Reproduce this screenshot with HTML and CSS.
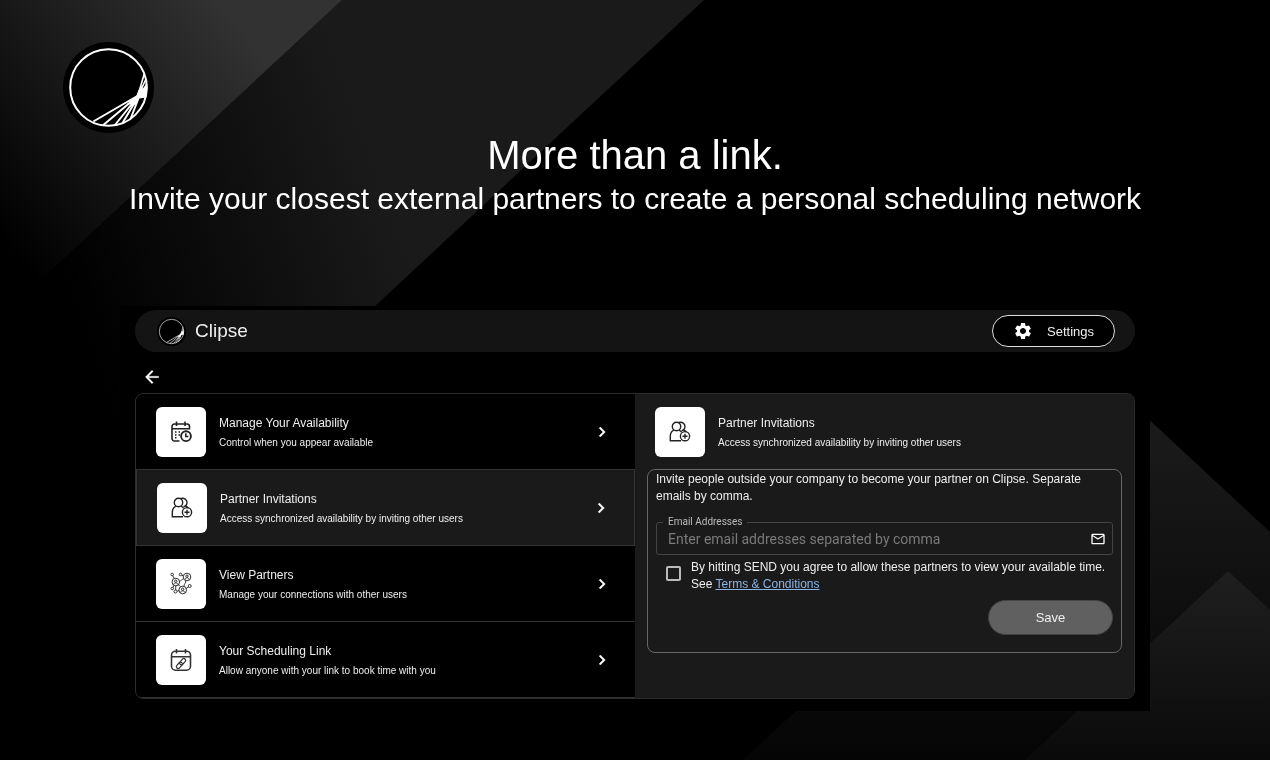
FILE: index.html
```html
<!DOCTYPE html>
<html lang="en">
<head>
    <meta charset="UTF-8">
    <meta name="viewport" content="width=device-width, initial-scale=1.0">
    <title>Clipse - Partner Invitations</title>
    <link rel="stylesheet" href="styles.css">
</head>
<body>
    <!-- Shared icons -->
    <svg class="sprite" aria-hidden="true">
        <symbol id="logo" viewBox="0 0 91 91">
            <circle cx="45.5" cy="45.5" r="45.5" fill="#000"/>
            <g fill="none" stroke="#fff" stroke-width="2">
                <circle cx="45.5" cy="45.5" r="38.3"/>
                <path d="M74.300 54L30.300 79.500M74.300 54.500L40.300 83M74.800 54.500L52 83M75 55L59.500 81M76 55L67.500 77"/>
                <path d="M74.500 55L81.500 31M76 52L83 37M76 54L84 42" stroke-width="1.600"/>
            </g>
            <path d="M72.500 56L75.500 48L79 44L80 47L83 43L84.500 45L83.500 55.500L76 56.500L72.500 63L64 62Z" fill="#fff"/>
        </symbol>
        <symbol id="chevron" viewBox="0 0 24 24">
            <path d="M8.590 16.590L13.170 12 8.590 7.410 10 6l6 6-6 6z" fill="#fff" stroke="#fff" stroke-width=".5"/>
        </symbol>
        <symbol id="partner-add" viewBox="0 0 24 24">
            <g fill="none" stroke="#222" stroke-width="1.400">
                <path d="M13 20.800H2.300v-4.600c0-3.200 1.400-5 3.700-6M11 10.300c1.200.4 1.900.9 2.500 1.700M15.300 10c1.500.4 2.600 1.200 3.200 2.200"/>
                <circle cx="8.500" cy="6.500" r="4.200"/>
                <path d="M10.800 2.500c3.500-1 6.200 1.200 6.200 4.100 0 2.200-1.400 3.800-3.500 4.200"/>
                <circle cx="17" cy="16.200" r="4.600"/>
                <path d="M17 13.700v5M14.500 16.200h5"/>
            </g>
        </symbol>
    </svg>

    <svg class="backdrop" viewBox="0 0 1270 760" preserveAspectRatio="xMidYMid slice" aria-hidden="true">
        <defs>
            <linearGradient id="g1" gradientUnits="userSpaceOnUse" x1="128" y1="-107" x2="-118" y2="98">
                <stop offset="0" stop-color="#323232"/>
                <stop offset="1" stop-color="#000"/>
            </linearGradient>
            <linearGradient id="g2" gradientUnits="userSpaceOnUse" x1="380" y1="180" x2="70" y2="290">
                <stop offset="0" stop-color="#1a1a1a"/>
                <stop offset="1" stop-color="#000"/>
            </linearGradient>
            <linearGradient id="g3" gradientUnits="userSpaceOnUse" x1="0" y1="401" x2="0" y2="760">
                <stop offset="0" stop-color="#1c1c1c"/>
                <stop offset="1" stop-color="#050505"/>
            </linearGradient>
            <linearGradient id="g4" gradientUnits="userSpaceOnUse" x1="0" y1="571" x2="0" y2="760">
                <stop offset="0" stop-color="#1f1f1f"/>
                <stop offset="1" stop-color="#0a0a0a"/>
            </linearGradient>
        </defs>
        <path d="M342 0H704L0 655V318Z" fill="url(#g2)"/>
        <path d="M0 0H342L0 318Z" fill="url(#g1)"/>
        <path d="M1129 401L1270 532V760H743Z" fill="url(#g3)"/>
        <path d="M1228 571L1270 610V760H1025Z" fill="url(#g4)"/>
    </svg>

    <header class="hero">
        <svg class="hero-logo" role="img" aria-label="Clipse"><use href="#logo"/></svg>
        <h1>More than a link.</h1>
        <p>Invite your closest external partners to create a personal scheduling network</p>
    </header>

    <main class="app">
        <div class="app-bar">
            <svg class="app-logo" aria-hidden="true"><use href="#logo"/></svg>
            <span class="app-name">Clipse</span>
            <button type="button" class="settings-btn">
                <svg viewBox="0 0 24 24" aria-hidden="true"><path fill="#fff" d="M19.140 12.940c.040-.300.060-.610.060-.940 0-.320-.020-.640-.070-.940l2.030-1.580c.180-.140.230-.410.120-.610l-1.920-3.320c-.120-.220-.370-.290-.590-.220l-2.390.960c-.500-.380-1.030-.700-1.620-.940l-.360-2.540c-.040-.240-.240-.410-.480-.410h-3.840c-.240 0-.430.170-.470.410l-.360 2.540c-.590.240-1.130.570-1.620.940l-2.390-.960c-.220-.080-.470 0-.590.220L2.740 8.870c-.120.210-.080.470.120.610l2.030 1.580c-.050.300-.090.630-.090.940s.020.640.070.940l-2.030 1.580c-.180.140-.230.410-.120.610l1.920 3.320c.120.220.370.290.590.220l2.390-.960c.500.380 1.030.700 1.620.940l.360 2.540c.050.240.240.410.480.410h3.840c.240 0 .440-.170.470-.410l.360-2.540c.590-.240 1.130-.560 1.620-.940l2.390.960c.220.080.470 0 .590-.220l1.920-3.320c.120-.220.070-.470-.120-.610l-2.010-1.580zM12 15.600c-1.980 0-3.600-1.620-3.600-3.600s1.620-3.600 3.600-3.600 3.600 1.620 3.600 3.600-1.620 3.600-3.600 3.600z"/></svg>
                Settings
            </button>
        </div>

        <button type="button" class="back-btn" aria-label="Back">
            <svg viewBox="0 0 24 24" aria-hidden="true"><path fill="#fff" d="M20 11H7.830l5.590-5.590L12 4l-8 8 8 8 1.410-1.410L7.830 13H20v-2z" stroke="#fff" stroke-width=".3"/></svg>
        </button>

        <div class="columns">
            <nav class="menu">
                <a href="#availability" class="item">
                    <span class="tile">
                        <svg viewBox="0 0 24 24" aria-hidden="true">
                            <g fill="none" stroke="#222" stroke-width="1.600">
                                <path d="M10.500 21H5.500A2.500 2.500 0 0 1 3 18.500V6.500A2.500 2.500 0 0 1 5.500 4H18a2.500 2.500 0 0 1 2.500 2.500V9.500M3 8.700h17.500M7.500 1.500v4.500M16 1.500v4.500"/>
                                <circle cx="17" cy="16.200" r="4.900" stroke-width="1.900"/>
                                <path d="M16.800 13.300v3.200h2.600"/>
                            </g>
                            <path d="M6 11.200h1.500v1.500H6zM9.500 11.200H11v1.500H9.500zM6 14.200h1.500v1.500H6zM9.500 14.200H11v1.500H9.500zM6 17h1.500v1.500H6z" fill="#222"/>
                        </svg>
                    </span>
                    <span class="item-text">
                        <span class="item-title">Manage Your Availability</span>
                        <span class="item-sub">Control when you appear available</span>
                    </span>
                    <svg class="chevron" aria-hidden="true"><use href="#chevron"/></svg>
                </a>
                <a href="#invitations" class="item active">
                    <span class="tile"><svg aria-hidden="true"><use href="#partner-add"/></svg></span>
                    <span class="item-text">
                        <span class="item-title">Partner Invitations</span>
                        <span class="item-sub">Access synchronized availability by inviting other users</span>
                    </span>
                    <svg class="chevron" aria-hidden="true"><use href="#chevron"/></svg>
                </a>
                <a href="#partners" class="item">
                    <span class="tile">
                        <svg viewBox="0 1 24 24" aria-hidden="true">
                            <g fill="none" stroke="#333" stroke-width="1">
                                <circle cx="18" cy="6" r="3.800"/>
                                <circle cx="6.800" cy="11" r="3.800"/>
                                <circle cx="13.700" cy="19" r="3.800"/>
                                <circle cx="18" cy="5.200" r="1.200"/><path d="M15.800 8.700c.4-2.500 4-2.500 4.400 0"/>
                                <circle cx="6.800" cy="10.200" r="1.200"/><path d="M4.600 13.700c.4-2.500 4-2.500 4.400 0"/>
                                <circle cx="13.700" cy="18.200" r="1.200"/><path d="M11.500 21.700c.4-2.500 4-2.500 4.400 0"/>
                                <circle cx="3.200" cy="3.500" r="1.300"/><path d="M3.700 4.700L5.300 7.500"/>
                                <circle cx="11.500" cy="3.500" r="1.300"/><path d="M12.800 4l1.600 1"/>
                                <circle cx="3.300" cy="17.500" r="1.300"/><path d="M4 16.300l1.200-2"/>
                                <circle cx="6.500" cy="20.500" r="1.500"/><path d="M8 20.200l2-.6M6.700 19l.1-4.200"/>
                                <circle cx="20.700" cy="15" r="1.500"/><path d="M19.500 16l-2.400 1.500"/>
                                <path d="M10.600 10.200c1.600-.2 2-1.700 3.800-2.400M9.300 14c1.500.3 1.800.8 2.300 1.800M15 15.200c0-2.500 2.200-3.200 1.700-5.600"/>
                            </g>
                        </svg>
                    </span>
                    <span class="item-text">
                        <span class="item-title">View Partners</span>
                        <span class="item-sub">Manage your connections with other users</span>
                    </span>
                    <svg class="chevron" aria-hidden="true"><use href="#chevron"/></svg>
                </a>
                <a href="#link" class="item">
                    <span class="tile">
                        <svg viewBox="0 0 24 24" aria-hidden="true">
                            <g fill="none" stroke="#333" stroke-width="1.600">
                                <rect x="2.500" y="3.200" width="19" height="19" rx="4"/>
                                <path d="M2.500 8.700h19M7.500 1v4.500M16.500 1v4.500"/>
                                <g transform="rotate(-48 12 15.500)" stroke-width="1.200">
                                    <rect x="6" y="13.700" width="7.200" height="3.600" rx="1.800"/>
                                    <rect x="10.800" y="13.700" width="7.200" height="3.600" rx="1.800"/>
                                </g>
                            </g>
                        </svg>
                    </span>
                    <span class="item-text">
                        <span class="item-title">Your Scheduling Link</span>
                        <span class="item-sub">Allow anyone with your link to book time with you</span>
                    </span>
                    <svg class="chevron" aria-hidden="true"><use href="#chevron"/></svg>
                </a>
            </nav>

            <section class="detail">
                <div class="detail-head">
                    <span class="tile"><svg aria-hidden="true"><use href="#partner-add"/></svg></span>
                    <div class="item-text">
                        <h2 class="item-title">Partner Invitations</h2>
                        <p class="item-sub">Access synchronized availability by inviting other users</p>
                    </div>
                </div>
                <form class="invite-form">
                    <p>Invite people outside your company to become your partner on Clipse. Separate emails by comma.</p>
                    <fieldset class="field">
                        <legend><label for="emails">Email Addresses</label></legend>
                        <div class="field-row">
                            <input type="text" id="emails" name="emails" placeholder="Enter email addresses separated by comma">
                            <svg viewBox="0 0 24 24" aria-hidden="true"><path fill="#fff" d="M20 4H4c-1.100 0-1.990.9-1.990 2L2 18c0 1.100.9 2 2 2h16c1.100 0 2-.9 2-2V6c0-1.100-.9-2-2-2zm0 14H4V8l8 5 8-5v10zm-8-7L4 6h16l-8 5z"/></svg>
                        </div>
                    </fieldset>
                    <div class="agree">
                        <input type="checkbox" id="agree" name="agree">
                        <label for="agree">By hitting SEND you agree to allow these partners to view your available time. See <a href="#terms">Terms &amp; Conditions</a></label>
                    </div>
                    <button type="submit" class="save-btn">Save</button>
                </form>
            </section>
        </div>
    </main>
</body>
</html>
```
FILE: styles.css
```css
* {
    box-sizing: border-box;
}

body {
    margin: 0;
    min-height: 100vh;
    background-color: #000;
    color: #fff;
    font-family: "Liberation Sans", Arial, sans-serif;
}

h1, h2, p {
    margin: 0;
    font-weight: normal;
}

button, input {
    font-family: inherit;
    color: inherit;
}

.sprite {
    position: absolute;
    width: 0;
    height: 0;
}

.backdrop {
    position: fixed;
    inset: 0;
    width: 100%;
    height: 100%;
    z-index: -1;
}

/* Hero */
.hero {
    padding-top: 42px;
    text-align: center;
}

.hero-logo {
    display: block;
    width: 91px;
    height: 91px;
    margin-left: 63px;
}

.hero h1 {
    font-size: 40px;
    line-height: 44px;
}

.hero p {
    font-size: 30px;
    line-height: 44px;
}

/* App window */
.app {
    margin: 85px 120px 48px;
    padding: 4px 15px 12px;
    background: #000;
}

.app-bar {
    display: flex;
    align-items: center;
    height: 42px;
    padding: 0 20px 0 22px;
    border-radius: 21px;
    background: #141414;
}

.app-logo {
    width: 29px;
    height: 29px;
}

.app-name {
    margin-left: 9px;
    font-size: 19px;
    color: #eee;
}

.settings-btn {
    display: flex;
    align-items: center;
    gap: 14px;
    height: 32px;
    margin-left: auto;
    padding: 0 20px;
    border: 1px solid #ddd;
    border-radius: 16px;
    background: #000;
    color: #eee;
    font-size: 13px;
    cursor: pointer;
}

.settings-btn svg {
    width: 20px;
    height: 20px;
}

.back-btn {
    display: block;
    padding: 15px 7px 6px;
    border: none;
    background: none;
    cursor: pointer;
}

.back-btn svg {
    display: block;
    width: 20px;
    height: 20px;
}

.columns {
    display: grid;
    grid-template-columns: 1fr 1fr;
    border: 1px solid #2c2c2c;
    border-radius: 8px;
    overflow: hidden;
}

/* Left menu */
.item {
    display: flex;
    align-items: center;
    padding: 13px 23px 12px 20px;
    border-bottom: 1px solid #333;
    color: inherit;
    text-decoration: none;
}

.item.active {
    border-left: 1px solid #333;
    border-right: 1px solid #333;
    background: #1a1a1a;
}

.tile {
    display: flex;
    align-items: center;
    justify-content: center;
    width: 50px;
    height: 50px;
    border-radius: 6px;
    background: #fff;
}

.tile svg {
    width: 24px;
    height: 24px;
}

.item-text {
    flex: 1;
    margin-left: 13px;
    padding-top: 2px;
    color: #eee;
}

.item-title {
    display: block;
    font-size: 12px;
    line-height: 20px;
}

.item-sub {
    display: block;
    font-size: 10px;
    line-height: 20px;
}

.chevron {
    width: 20px;
    height: 20px;
}

/* Right pane */
.detail {
    padding: 13px 12px;
    background: #1a1a1a;
}

.detail-head {
    display: flex;
    align-items: center;
    padding: 0 8px;
    margin-bottom: 12px;
}

.invite-form {
    padding: 1px 8px 17px;
    border: 1px solid #666;
    border-radius: 8px;
    color: #eee;
    font-size: 12px;
    line-height: 17px;
}

.field {
    margin: 11px 0 0;
    padding: 0 6px 5px;
    border: 1px solid #444;
    border-radius: 3px;
}

.field legend {
    padding: 0 5px;
    color: #bbb;
    font-family: Roboto, sans-serif;
    font-size: 10px;
    line-height: 12px;
}

.field-row {
    display: flex;
    align-items: center;
}

.field input {
    flex: 1;
    min-width: 0;
    height: 21px;
    padding: 0 5px;
    border: none;
    outline: none;
    background: none;
    font-family: Roboto, sans-serif;
    font-size: 14px;
}

.field input::placeholder {
    color: #7a7a7a;
}

.field svg {
    width: 16px;
    height: 16px;
}

.agree {
    display: flex;
    gap: 10px;
    margin: 4px 0 7px;
    padding-left: 10px;
}

.agree input {
    appearance: none;
    flex: none;
    width: 15px;
    height: 15px;
    margin: 7px 0 0;
    border: 2px solid #bbb;
    border-radius: 2px;
}

.agree input:checked {
    background: #8ab4e8;
}

.agree a {
    color: #8ab4e8;
}

.save-btn {
    display: block;
    width: 125px;
    height: 35px;
    margin-left: auto;
    border: 1px solid #444;
    border-radius: 18px;
    background: #606060;
    font-size: 13px;
    cursor: pointer;
}
```
